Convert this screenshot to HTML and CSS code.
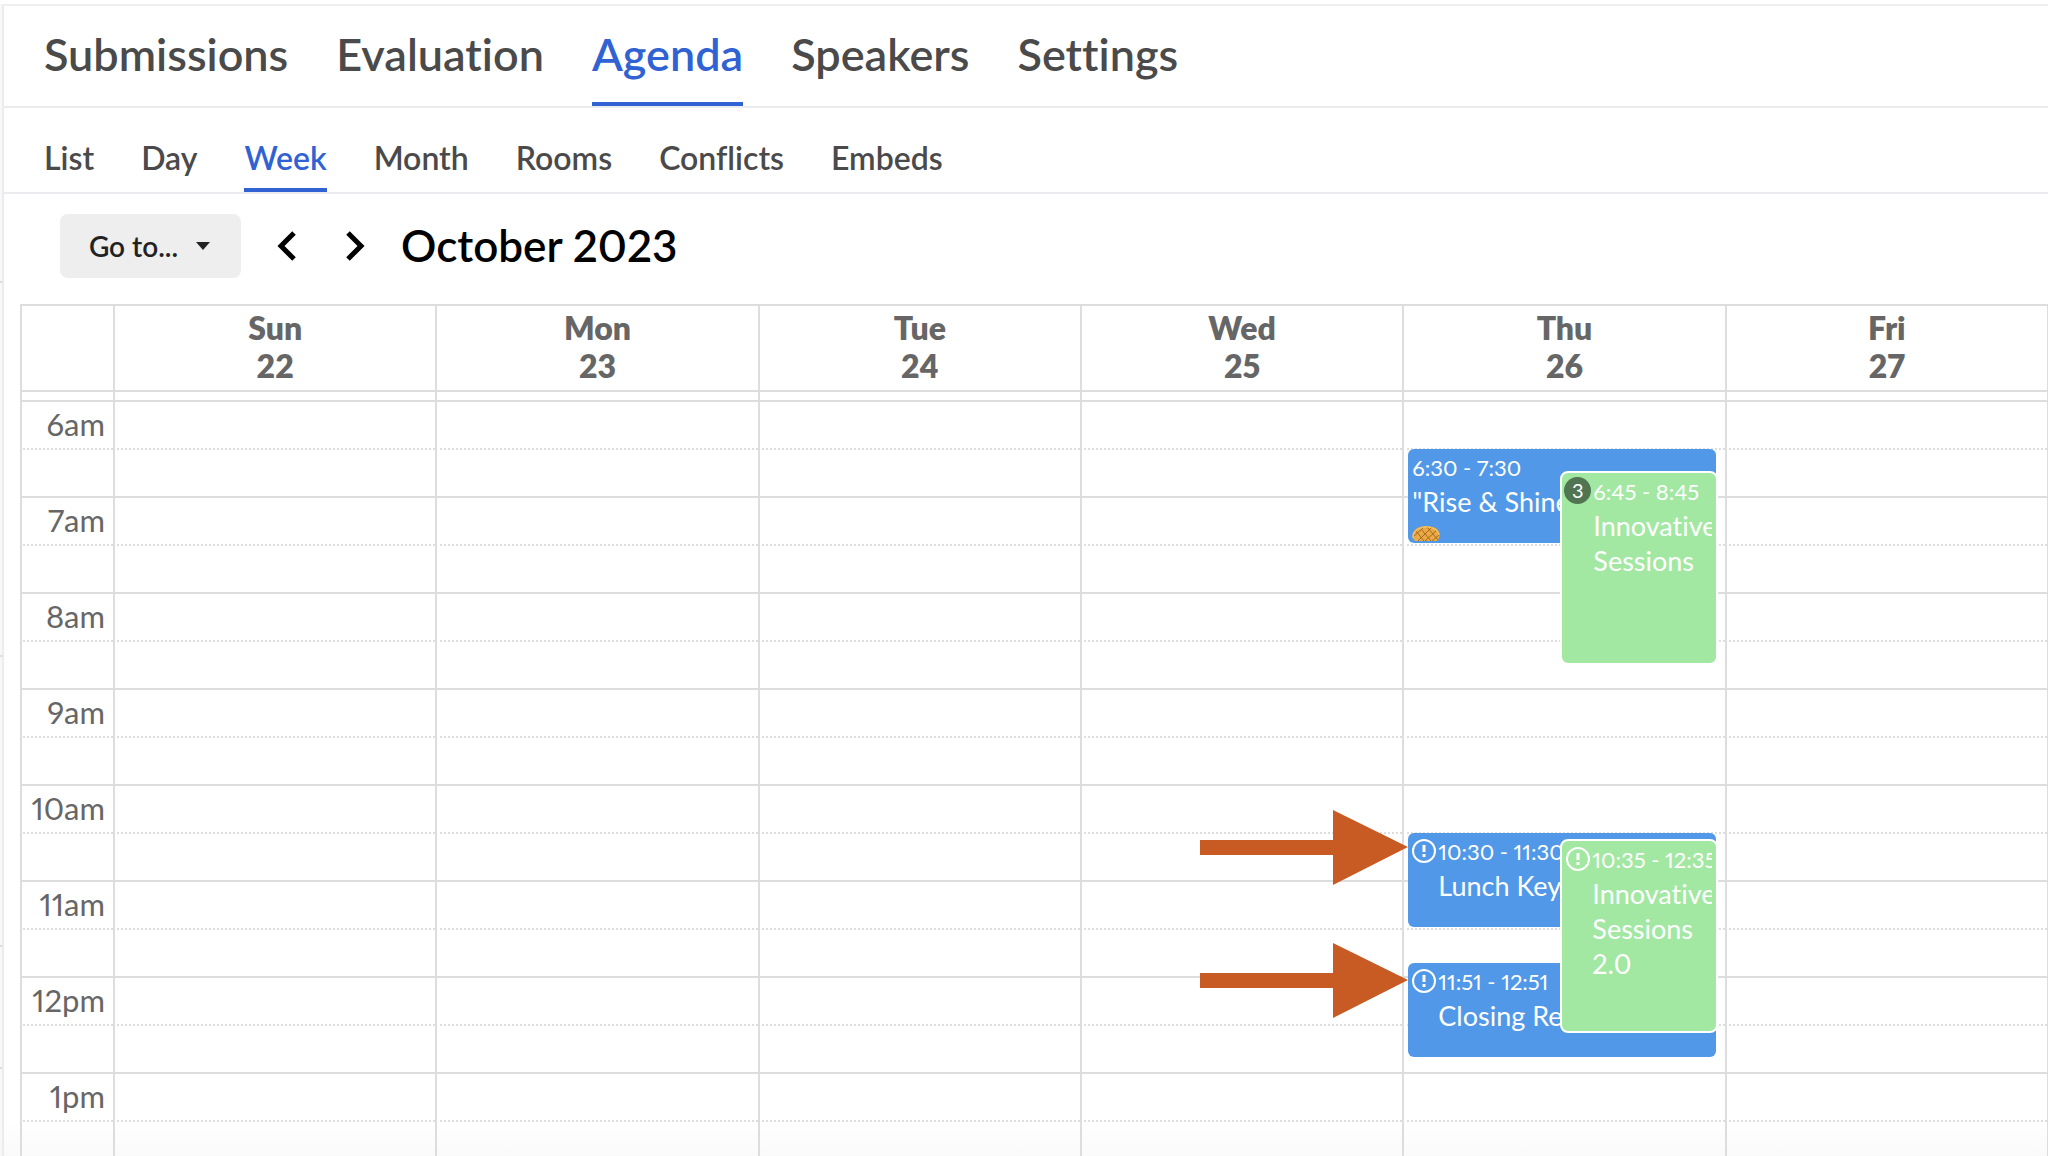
FILE: index.html
```html
<!DOCTYPE html>
<html lang="en">
<head>
<meta charset="utf-8">
<title>Agenda</title>
<link rel="stylesheet" href="styles.css">
</head>
<body>
<div class="app">
  <div class="rail"></div>
  <main class="main">
    <nav class="tabs" aria-label="Sections">
      <a class="tab" href="#submissions">Submissions</a>
      <a class="tab" href="#evaluation">Evaluation</a>
      <a class="tab active" href="#agenda">Agenda</a>
      <a class="tab" href="#speakers">Speakers</a>
      <a class="tab" href="#settings">Settings</a>
    </nav>
    <nav class="tabs subtabs" aria-label="Agenda views">
      <a class="tab" href="#list">List</a>
      <a class="tab" href="#day">Day</a>
      <a class="tab active" href="#week">Week</a>
      <a class="tab" href="#month">Month</a>
      <a class="tab" href="#rooms">Rooms</a>
      <a class="tab" href="#conflicts">Conflicts</a>
      <a class="tab" href="#embeds">Embeds</a>
    </nav>
    <div class="toolbar">
      <button class="goto" type="button">Go to...<span class="caret"></span></button>
      <button class="arrow" type="button" aria-label="Previous week"><svg width="20" height="30" viewBox="0 0 20 30"><path d="M17 2 L4 15 L17 28"/></svg></button>
      <button class="arrow" type="button" aria-label="Next week"><svg width="20" height="30" viewBox="0 0 20 30"><path d="M3 2 L16 15 L3 28"/></svg></button>
      <h1 class="title">October 2023</h1>
    </div>
    <div class="calendar">
      <table class="week">
        <thead>
          <tr class="days"><th class="time"></th><th>Sun<br>22</th><th>Mon<br>23</th><th>Tue<br>24</th><th>Wed<br>25</th><th>Thu<br>26</th><th>Fri<br>27</th></tr>
          <tr class="gap"><td></td><td></td><td></td><td></td><td></td><td></td><td></td></tr>
        </thead>
        <tbody>
          <tr><th class="time">6am</th><td></td><td></td><td></td><td></td>
            <td class="track">
              <article class="event" style="top:47px;height:94px">
                <div class="when">6:30 - 7:30</div>
                <div class="what">"Rise &amp; Shine</div>
                <svg class="waffle" width="28" height="15" viewBox="0 0 28 15"><path d="M3 15 C-2 10 1 3 8 1 C13 -1 21 0 25 3 C29 7 28 12 25 15 Z" fill="#e9a944"/><path d="M2 10 L12 1 M6 15 L20 1 M13 15 L25 4 M20 15 L27 9 M4 5 L12 15 M9 3 L19 15 M15 1 L26 14" stroke="#a9681f" stroke-width="1" fill="none"/><path d="M1 12 C0 7 5 2 13 1 C20 1 26 3 27 9" stroke="#f6cd7c" stroke-width="1" fill="none"/></svg>
              </article>
              <article class="event green" style="top:69px;height:194px">
                <span class="count">3</span>
                <div class="when">6:45 - 8:45</div>
                <div class="what">Innovative Sessions</div>
              </article>
              <article class="event flagged" style="top:431px;height:94px">
                <svg class="alert" width="24" height="24" viewBox="0 0 24 24"><circle cx="12" cy="12" r="11"/><path d="M12 6 V13 M12 15 V18"/></svg>
                <div class="when">10:30 - 11:30</div>
                <div class="what">Lunch Key</div>
              </article>
              <article class="event flagged" style="top:561px;height:94px">
                <svg class="alert" width="24" height="24" viewBox="0 0 24 24"><circle cx="12" cy="12" r="11"/><path d="M12 6 V13 M12 15 V18"/></svg>
                <div class="when">11:51 - 12:51</div>
                <div class="what">Closing Re</div>
              </article>
              <article class="event green flagged" style="top:437px;height:194px">
                <svg class="alert" width="24" height="24" viewBox="0 0 24 24"><circle cx="12" cy="12" r="11"/><path d="M12 6 V13 M12 15 V18"/></svg>
                <div class="when">10:35 - 12:35</div>
                <div class="what">Innovative Sessions 2.0</div>
              </article>
              <svg class="pointer" style="top:408px" width="208" height="75" viewBox="0 0 208 75"><path d="M0 30 H133 V0 L208 37 L133 75 V45 H0 Z"/></svg>
              <svg class="pointer" style="top:541px" width="208" height="75" viewBox="0 0 208 75"><path d="M0 30 H133 V0 L208 37 L133 75 V45 H0 Z"/></svg>
            </td><td></td></tr>
          <tr class="half"><td></td><td></td><td></td><td></td><td></td><td></td><td></td></tr>
          <tr><th class="time">7am</th><td></td><td></td><td></td><td></td><td></td><td></td></tr>
          <tr class="half"><td></td><td></td><td></td><td></td><td></td><td></td><td></td></tr>
          <tr><th class="time">8am</th><td></td><td></td><td></td><td></td><td></td><td></td></tr>
          <tr class="half"><td></td><td></td><td></td><td></td><td></td><td></td><td></td></tr>
          <tr><th class="time">9am</th><td></td><td></td><td></td><td></td><td></td><td></td></tr>
          <tr class="half"><td></td><td></td><td></td><td></td><td></td><td></td><td></td></tr>
          <tr><th class="time">10am</th><td></td><td></td><td></td><td></td><td></td><td></td></tr>
          <tr class="half"><td></td><td></td><td></td><td></td><td></td><td></td><td></td></tr>
          <tr><th class="time">11am</th><td></td><td></td><td></td><td></td><td></td><td></td></tr>
          <tr class="half"><td></td><td></td><td></td><td></td><td></td><td></td><td></td></tr>
          <tr><th class="time">12pm</th><td></td><td></td><td></td><td></td><td></td><td></td></tr>
          <tr class="half"><td></td><td></td><td></td><td></td><td></td><td></td><td></td></tr>
          <tr><th class="time">1pm</th><td></td><td></td><td></td><td></td><td></td><td></td></tr>
          <tr class="half"><td></td><td></td><td></td><td></td><td></td><td></td><td></td></tr>
        </tbody>
      </table>
    </div>
  </main>
</div>
</body>
</html>
```
FILE: styles.css
```css
* { box-sizing: border-box; }
body {
  margin: 0;
  height: 100vh;
  overflow: hidden;
  background: linear-gradient(to top, #fafafa, #fff 36px);
  color: #4a4a4a;
  font-family: Lato, "Open Sans", sans-serif;
  font-variant-numeric: proportional-nums;
  font-variant-ligatures: none;
}
.app {
  display: flex;
  height: 100%;
  padding-top: 4px;
}
.rail {
  flex: none;
  width: 4px;
  border-right: 2px solid #ebebf0;
  background:
    linear-gradient(#ddd, #ddd) 0 277px / 2px 2px no-repeat,
    linear-gradient(#ddd, #ddd) 0 651px / 2px 2px no-repeat,
    linear-gradient(#ddd, #ddd) 0 941px / 2px 2px no-repeat,
    linear-gradient(#ddd, #ddd) 0 1063px / 2px 2px no-repeat,
    #f8f8f8;
}
.main {
  flex: 1;
  min-width: 0;
  overflow: hidden;
  border-top: 2px solid #efefef;
}
.tabs {
  display: flex;
  gap: 48px;
  height: 102px;
  padding: 0 40px;
  border-bottom: 2px solid #ebebf0;
  font-size: 45px;
  font-weight: 600;
}
.tab {
  padding-top: 22px;
  line-height: 52px;
  color: #4a4a4a;
  text-decoration: none;
  border-bottom: 4px solid transparent;
}
.tab.active {
  color: #3162d4;
  border-bottom-color: #3162d4;
}
.subtabs {
  gap: 47px;
  height: 86px;
  font-size: 32px;
}
.subtabs .tab {
  padding-top: 30px;
  line-height: 40px;
}
.toolbar {
  display: flex;
  align-items: center;
  height: 110px;
  padding: 0 56px 6px;
}
.goto {
  display: flex;
  align-items: center;
  justify-content: center;
  gap: 18px;
  width: 181px;
  height: 64px;
  margin-right: 26px;
  padding: 0 2px 0 0;
  border: 0;
  border-radius: 8px;
  background: #eee;
  color: #222;
  font: 600 28px Lato, sans-serif;
}
.caret {
  border: 7px solid transparent;
  border-top: 8px solid #222;
  border-bottom: 0;
}
.arrow {
  display: flex;
  width: 40px;
  margin-right: 28px;
  padding: 0 10px;
  border: 0;
  background: none;
}
.arrow path {
  fill: none;
  stroke: #000;
  stroke-width: 5;
}
.title {
  margin: 0 0 0 -2px;
  padding-bottom: 2px;
  color: #000;
  font-size: 44px;
  line-height: 52px;
  font-weight: 600;
}
.calendar {
  margin: 0 -1px 0 16px;
}
.week {
  width: 100%;
  table-layout: fixed;
  border-spacing: 0;
  border-right: 2px solid #ddd;
  color: #666;
  font-size: 32px;
}
.week th,
.week td {
  height: 48px;
  padding: 0;
  border: 0 solid #ddd;
  border-width: 2px 0 0 2px;
}
.week .time {
  width: 93px;
  padding: 0 8px 2px 0;
  text-align: right;
  font-size: 31px;
  font-weight: 400;
  line-height: 38px;
}
.week .days th {
  height: 86px;
  padding-bottom: 2px;
  font-weight: 800;
  line-height: 38px;
}
.week .gap td { height: 10px; }
.week .half td { border-top-style: dotted; }
.week .track { position: relative; }
.event {
  position: absolute;
  z-index: 1;
  left: 4px;
  right: 9px;
  padding: 2px 4px;
  overflow: hidden;
  border-radius: 6px;
  background: #5298e9;
  color: #fff;
}
.event.green {
  left: 156px;
  right: 7px;
  padding-left: 31px;
  border: 2px solid #fff;
  border-radius: 8px;
  background: #a2e8a2;
}
.event.flagged { padding-left: 30px; }
.event.green .when,
.event.green .what {
  overflow: hidden;
}
.when {
  font-size: 22px;
  line-height: 33px;
  white-space: nowrap;
}
.what {
  font-size: 27px;
  line-height: 35px;
}
.waffle {
  position: absolute;
  left: 4px;
  bottom: 2px;
}
.alert {
  position: absolute;
  left: 4px;
  top: 6px;
  fill: none;
  stroke: #fff;
  stroke-width: 2;
}
.alert path { stroke-width: 3; }
.count {
  position: absolute;
  left: 2px;
  top: 4px;
  width: 27px;
  height: 27px;
  border-radius: 50%;
  background: #517451;
  font-size: 20px;
  line-height: 26px;
  text-align: center;
}
.pointer {
  position: absolute;
  z-index: 2;
  left: -204px;
  fill: #c85a24;
}
```
